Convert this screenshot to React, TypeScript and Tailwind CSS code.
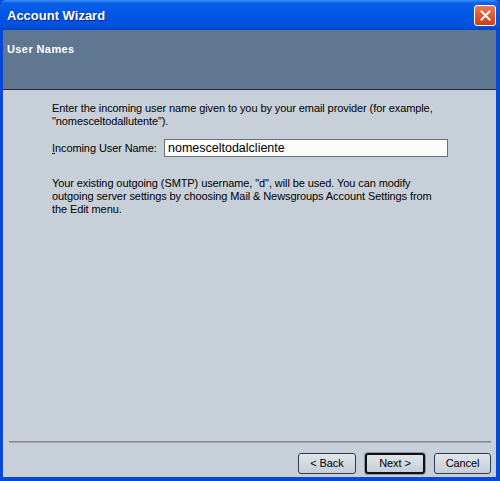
export default function App(): JSX.Element {
  return (
    <div className="w-[500px] h-[481px] flex flex-col bg-[#0a47d6] font-['Liberation_Sans',Arial,sans-serif] text-[11px] leading-[13px] text-black">
      {/* Title bar */}
      <div className="h-[30px] shrink-0 flex items-center justify-between pl-[7px] pr-[4px] rounded-t-[6px] bg-[linear-gradient(to_bottom,#3d8ef7_0%,#0b60e8_10%,#0056e4_45%,#0052dc_85%,#0044c6_100%)]">
        <span className="text-white font-bold text-[13px] [text-shadow:1px_1px_#0b2a80]">Account Wizard</span>
        <div className="w-[22px] h-[21px] rounded-[3px] border border-white bg-[linear-gradient(to_bottom,#ec7a57,#e0502c_60%,#c9401e)] flex items-center justify-center">
          <svg width="11" height="11" viewBox="0 0 11 11">
            <path d="M1.5 1.5 L9.5 9.5 M9.5 1.5 L1.5 9.5" stroke="white" strokeWidth="2" strokeLinecap="square" />
          </svg>
        </div>
      </div>

      {/* Window body */}
      <div className="flex-1 flex flex-col ml-[3px] mr-[4px] mb-[4px]">
        {/* Header band */}
        <div className="h-[60px] shrink-0 bg-[#5f7791] border-b border-[#242c38] pl-[4px] pt-[13px]">
          <span className="text-white font-bold tracking-[0.4px]">User Names</span>
        </div>

        {/* Content */}
        <div className="flex-1 flex flex-col bg-[#c7cfd8] tracking-[-0.09px]">
          <div className="pl-[49px] pt-[12px]">
            <p>
              Enter the incoming user name given to you by your email provider (for example,
              <br />
              "nomesceltodallutente").
            </p>
            <div className="flex items-center mt-[11px]">
              <label className="w-[112px]">
                <span className="underline">I</span>ncoming User Name:
              </label>
              <div className="w-[284px] h-[18px] bg-[#fcfdfb] border border-[#66717e] flex items-center pl-[3px] text-[12.5px] tracking-normal">
                nomesceltodalcliente
              </div>
            </div>
            <p className="mt-[20px]">
              Your existing outgoing (SMTP) username, "d", will be used. You can modify
              <br />
              outgoing server settings by choosing Mail &amp; Newsgroups Account Settings from
              <br />
              the Edit menu.
            </p>
          </div>

          <div className="flex-1" />

          <div className="ml-[6px] mr-[5px] border-t border-b border-t-[#858b93] border-b-[#9da4ac]" />

          <div className="flex justify-end gap-[9px] pr-[5px] pt-[10px] pb-[3px]">
            <button className="w-[58px] h-[21px] rounded-[3px] border border-[#2f3d52] bg-[linear-gradient(to_bottom,#dfe5ea,#c5cdd6)]">
              &lt; Back
            </button>
            <button className="w-[60px] h-[21px] rounded-[3px] border-2 border-[#111] ring-1 ring-[#8a96a4] bg-[linear-gradient(to_bottom,#dfe5ea,#c5cdd6)]">
              Next &gt;
            </button>
            <button className="w-[57px] h-[21px] rounded-[3px] border border-[#2f3d52] bg-[linear-gradient(to_bottom,#dfe5ea,#c5cdd6)]">
              Cancel
            </button>
          </div>
        </div>
      </div>
    </div>
  );
}
